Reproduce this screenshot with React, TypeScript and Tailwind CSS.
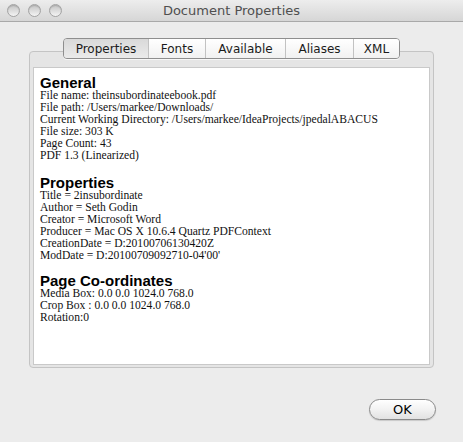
import type { ReactNode } from "react"

const sans = { fontFamily: '"DejaVu Sans", "Lucida Grande", sans-serif' }
const serif = { fontFamily: '"Liberation Serif", "Times New Roman", serif' }
const head = { fontFamily: '"Liberation Sans", Arial, sans-serif' }

const tabs = [
  { label: "Properties", width: "w-[84px]" },
  { label: "Fonts", width: "w-[57px]" },
  { label: "Available", width: "w-[80px]" },
  { label: "Aliases", width: "w-[68px]" },
  { label: "XML", width: "w-[46px]" },
]

const sections: { title: string; gap: string; lines: string[] }[] = [
  {
    title: "General",
    gap: "",
    lines: [
      "File name: theinsubordinateebook.pdf",
      "File path: /Users/markee/Downloads/",
      "Current Working Directory: /Users/markee/IdeaProjects/jpedalABACUS",
      "File size: 303 K",
      "Page Count: 43",
      "PDF 1.3 (Linearized)",
    ],
  },
  {
    title: "Properties",
    gap: "mt-[13px]",
    lines: [
      "Title = 2insubordinate",
      "Author = Seth Godin",
      "Creator = Microsoft Word",
      "Producer = Mac OS X 10.6.4 Quartz PDFContext",
      "CreationDate = D:20100706130420Z",
      "ModDate = D:20100709092710-04'00'",
    ],
  },
  {
    title: "Page Co-ordinates",
    gap: "mt-[11px]",
    lines: ["Media Box: 0.0 0.0 1024.0 768.0", "Crop Box : 0.0 0.0 1024.0 768.0", "Rotation:0"],
  },
]

function Light() {
  return <span className="size-[13px] rounded-full border border-[#a3a3a3] bg-linear-to-b from-[#c4c4c4] to-[#f4f4f4] shadow-[inset_0_1px_1px_rgba(0,0,0,.15)]" />
}

function Section({ title, children, className }: { title: string; children: ReactNode; className?: string }) {
  return (
    <div className={className}>
      <div className="text-[15px] font-bold leading-[15px] text-black" style={head}>
        {title}
      </div>
      <div className="text-[11.6px] leading-[12px] text-[#111]" style={serif}>
        {children}
      </div>
    </div>
  )
}

export default function App() {
  return (
    <div className="flex h-[442px] w-[463px] flex-col overflow-hidden bg-[#ececec]" style={sans}>
      <div className="relative flex h-[22px] shrink-0 items-center border-b border-[#a9a9a9] bg-linear-to-b from-[#ededed] to-[#d6d6d6]">
        <div className="flex gap-[8px] pl-[7px]">
          <Light />
          <Light />
          <Light />
        </div>
        <div className="absolute inset-0 flex items-center justify-center text-[13px] text-[#4f4f4f]">Document Properties</div>
      </div>

      <div className="mt-[16px] flex justify-center">
        <div className="relative z-10 flex h-[21px] overflow-hidden rounded-[4px] border border-[#8e8e8e] text-[12px] text-[#1b1b1b] shadow-[0_1px_0_rgba(255,255,255,.7)]">
          {tabs.map((tab, index) => (
            <div
              key={tab.label}
              className={
                "flex items-center justify-center " +
                tab.width +
                " " +
                (index > 0 ? "border-l border-[#c2c2c2] " : "") +
                (index === 0 ? "bg-linear-to-b from-[#d9d9d9] to-[#ebebeb]" : "bg-linear-to-b from-[#ffffff] to-[#f1f1f1]")
              }
            >
              {tab.label}
            </div>
          ))}
        </div>
      </div>

      <div className="mx-[29px] -mt-[8px] flex h-[317px] flex-col rounded-[4px] border border-[#c4c4c4] bg-[#e5e5e5] px-[3px] pb-[2px] pt-[15px]">
        <div className="flex-1 border border-[#c9c9c9] bg-white pl-[6px] pt-[7px]">
          {sections.map((section) => (
            <Section key={section.title} title={section.title} className={section.gap}>
              {section.lines.map((line) => (
                <div key={line} className="whitespace-nowrap">
                  {line}
                </div>
              ))}
            </Section>
          ))}
        </div>
      </div>

      <div className="mr-[27px] mt-[31px] flex justify-end">
        <button className="flex h-[21px] w-[67px] items-center justify-center rounded-full border border-[#8a8a8a] bg-linear-to-b from-[#ffffff] via-[#f2f2f2] to-[#e2e2e2] text-[13px] text-black shadow-[0_1px_1px_rgba(0,0,0,.15)]">
          OK
        </button>
      </div>
    </div>
  )
}
